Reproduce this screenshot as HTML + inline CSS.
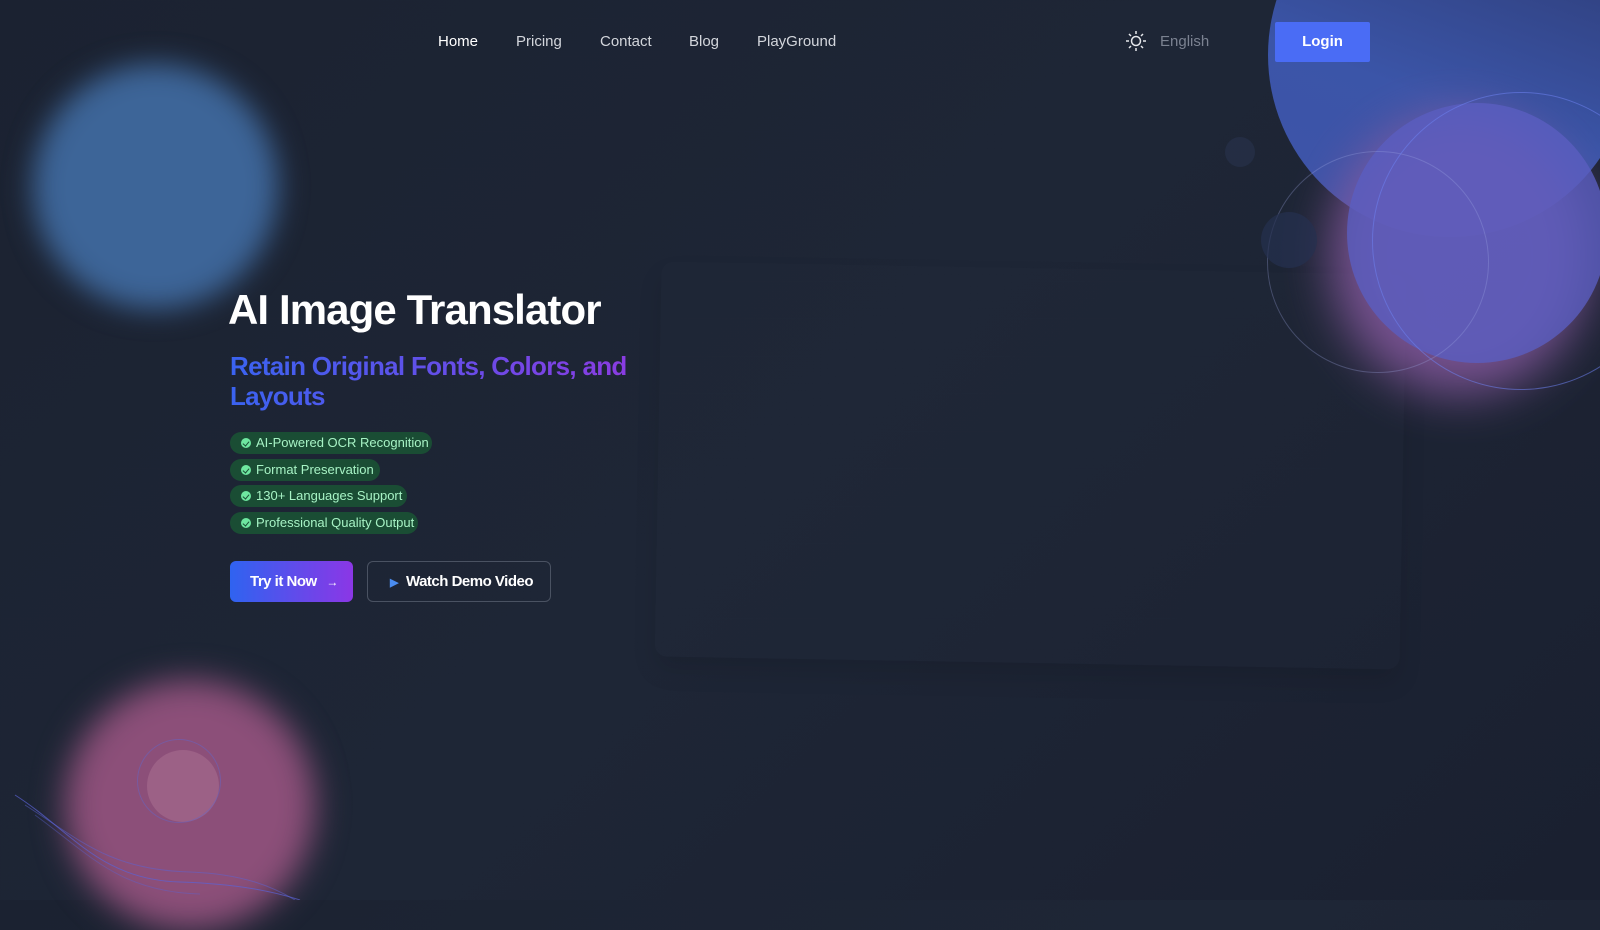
<!DOCTYPE html>
<html><head><meta charset="utf-8"><style>
*{margin:0;padding:0;box-sizing:border-box}
body{width:1600px;height:900px;overflow:hidden;background:linear-gradient(135deg,#1b2231 0%,#1e2636 50%,#1a2030 100%);font-family:"Liberation Sans",sans-serif;position:relative}
.abs{position:absolute}
.blur{position:absolute;border-radius:50%}
nav a{position:absolute;top:33px;font-size:15px;color:#d3d6dc;text-decoration:none}
.badge{position:absolute;left:230px;height:22px;border-radius:11px;background:#1a4d34;color:#a7f3c5;font-size:13px;line-height:22px;padding-left:26px}
.badge:before{content:"";position:absolute;left:11px;top:6px;width:10px;height:10px;border-radius:50%;background:#6ee7a0}
.badge:after{content:"";position:absolute;left:14px;top:8px;width:3px;height:5px;border:solid #1a4d34;border-width:0 1.5px 1.5px 0;transform:rotate(40deg)}
</style></head><body>
<div class="blur" style="left:33px;top:64px;width:245px;height:245px;background:#3d6598;filter:blur(14px)"></div>
<div class="blur" style="left:65px;top:680px;width:250px;height:250px;background:#8c4f79;filter:blur(16px)"></div>
<div class="blur" style="left:147px;top:750px;width:72px;height:72px;background:#a0658a;opacity:.8"></div>
<div class="blur" style="left:137px;top:739px;width:84px;height:84px;border:1px solid #6466c8;opacity:.5"></div>
<svg class="abs" style="left:0;top:770px" width="320" height="130"><path d="M15 25 C70 60 100 110 180 112 C240 114 275 122 300 130" stroke="#5b63d6" fill="none" opacity=".7"/><path d="M25 35 C80 70 110 100 190 102 C245 104 275 118 295 130" stroke="#5b63d6" fill="none" opacity=".5"/><path d="M35 45 C90 85 120 122 200 124" stroke="#5b63d6" fill="none" opacity=".4"/></svg>
<div class="abs" style="left:658px;top:268px;width:745px;height:395px;background:rgba(255,255,255,.006);border-radius:12px;transform:rotate(1deg);box-shadow:0 14px 24px rgba(0,0,0,.1)"></div>
<div class="blur" style="left:1268px;top:-127px;width:364px;height:364px;background:linear-gradient(200deg,#2a3568,#3b55a8 60%,#3f53a8)"></div>
<div class="blur" style="left:1330px;top:115px;width:260px;height:280px;background:#86599f;filter:blur(24px);opacity:.85"></div>
<div class="blur" style="left:1347px;top:103px;width:260px;height:260px;background:#5a5ec0;opacity:.8"></div>
<div class="blur" style="left:1267px;top:151px;width:222px;height:222px;border:1px solid rgba(160,170,230,.3)"></div>
<div class="blur" style="left:1372px;top:92px;width:298px;height:298px;border:1px solid rgba(110,130,240,.55)"></div>
<div class="blur" style="left:1225px;top:137px;width:30px;height:30px;background:#26304a;opacity:.7"></div>
<div class="blur" style="left:1261px;top:212px;width:56px;height:56px;background:#253050;opacity:.7"></div>
<nav>
<a style="left:438px;color:#fff">Home</a><a style="left:516px">Pricing</a><a style="left:600px">Contact</a><a style="left:689px">Blog</a><a style="left:757px">PlayGround</a>
</nav>
<svg class="abs" style="left:1126px;top:31px" width="20" height="20" viewBox="0 0 20 20" stroke="#e5e7eb" stroke-width="1.5" fill="none"><circle cx="10" cy="10" r="4.5"/><path d="M10 0v3M10 17v3M0 10h3M17 10h3M3 3l2 2M15 15l2 2M3 17l2-2M15 5l2-2"/></svg>
<div class="abs" style="left:1160px;top:33px;font-size:15px;color:#7b8291">English</div>
<div class="abs" style="left:1275px;top:22px;width:95px;height:40px;background:#4a6cf5;color:#fff;font-size:15px;font-weight:bold;text-align:center;line-height:40px;border-radius:2px">Login</div>
<div class="abs" style="left:228px;top:286px;font-size:42px;font-weight:bold;color:#fff;letter-spacing:-.9px">AI Image Translator</div>
<div class="abs" style="left:230px;top:351px;width:440px;font-size:26px;line-height:30px;font-weight:bold;letter-spacing:-.7px;background:linear-gradient(90deg,#3a63f0,#9238e0);-webkit-background-clip:text;color:transparent">Retain Original Fonts, Colors, and<br>Layouts</div>
<div class="badge" style="top:432px;width:202px">AI-Powered OCR Recognition</div>
<div class="badge" style="top:459px;width:150px">Format Preservation</div>
<div class="badge" style="top:485px;width:177px">130+ Languages Support</div>
<div class="badge" style="top:512px;width:188px">Professional Quality Output</div>
<div class="abs" style="left:230px;top:561px;width:123px;height:41px;border-radius:6px;background:linear-gradient(90deg,#2f63f0,#8b37e6);color:#fff;font-weight:bold;font-size:15px;line-height:41px;padding-left:20px;letter-spacing:-.5px">Try it Now <span style="font-size:12px;margin-left:6px">→</span></div>
<div class="abs" style="left:367px;top:561px;width:184px;height:41px;border-radius:6px;border:1px solid #4a5262;color:#fff;font-weight:bold;font-size:15px;line-height:39px;padding-left:22px;letter-spacing:-.5px"><span style="color:#4a8cf0;font-size:11px;margin-right:8px">▶</span>Watch Demo Video</div>
</body></html>
